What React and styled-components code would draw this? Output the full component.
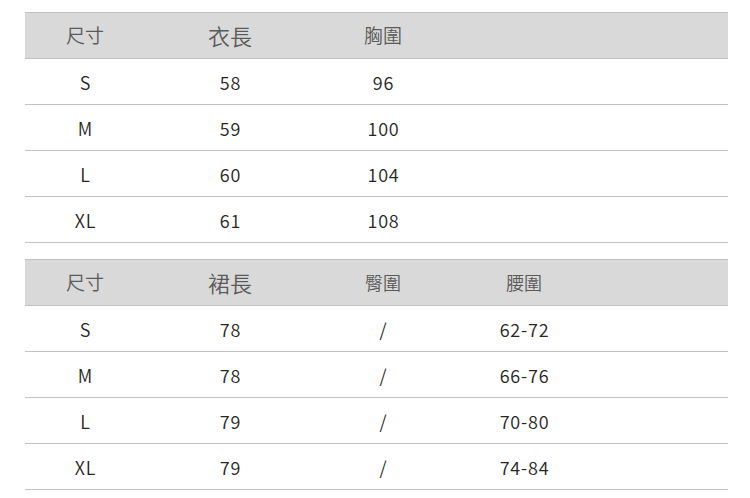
import React from "react";
import styled, { createGlobalStyle } from "styled-components";

const Global = createGlobalStyle`
  html, body { margin: 0; padding: 0; background: #ffffff; }
  body { font-family: "Noto Sans CJK TC", "Noto Sans", sans-serif; }
`;

const Page = styled.div`
  width: 750px;
  height: 498px;
  box-sizing: border-box;
  padding: 12px 22px 0 25px;
  display: flex;
  flex-direction: column;
  gap: 16px;
  overflow: hidden;
`;

const Table = styled.div`
  width: 703px;
  display: flex;
  flex-direction: column;
  border-top: 1px solid #c2c2c2;
`;

const Row = styled.div`
  display: grid;
  grid-template-columns: 120px 170px 136px 146px 1fr;
  height: 46px;
  box-sizing: border-box;
  border-bottom: 1px solid #c2c2c2;
  align-items: center;
  background: ${(p) => (p.$head ? "#d9d9d9" : "#ffffff")};
`;

const Cell = styled.div`
  text-align: center;
  font-size: ${(p) => p.$size || 18}px;
  color: ${(p) => (p.$head ? "#5a5a5a" : "#262626")};
  font-weight: 350;
  line-height: 1;
  letter-spacing: ${(p) => (p.$head ? 0 : 0.8)}px;
  padding-left: ${(p) => (p.$head ? 0 : 1)}px;
  padding-bottom: ${(p) => (p.$head ? 2 : 0)}px;
`;

const top = {
  head: [
    ["尺寸", 19],
    ["衣長", 22],
    ["胸圍", 19],
  ],
  rows: [
    ["S", "58", "96"],
    ["M", "59", "100"],
    ["L", "60", "104"],
    ["XL", "61", "108"],
  ],
};

const bottom = {
  head: [
    ["尺寸", 19],
    ["裙長", 22],
    ["臀圍", 18],
    ["腰圍", 18],
  ],
  rows: [
    ["S", "78", "/", "62-72"],
    ["M", "78", "/", "66-76"],
    ["L", "79", "/", "70-80"],
    ["XL", "79", "/", "74-84"],
  ],
};

function SizeTable({ data }) {
  return (
    <Table>
      <Row $head>
        {data.head.map(([t, s]) => (
          <Cell key={t} $head $size={s}>
            {t}
          </Cell>
        ))}
      </Row>
      {data.rows.map((r) => (
        <Row key={r[0]}>
          {r.map((v, i) => (
            <Cell key={i}>{v}</Cell>
          ))}
        </Row>
      ))}
    </Table>
  );
}

export default function App() {
  return (
    <>
      <Global />
      <Page>
        <SizeTable data={top} />
        <SizeTable data={bottom} />
      </Page>
    </>
  );
}
